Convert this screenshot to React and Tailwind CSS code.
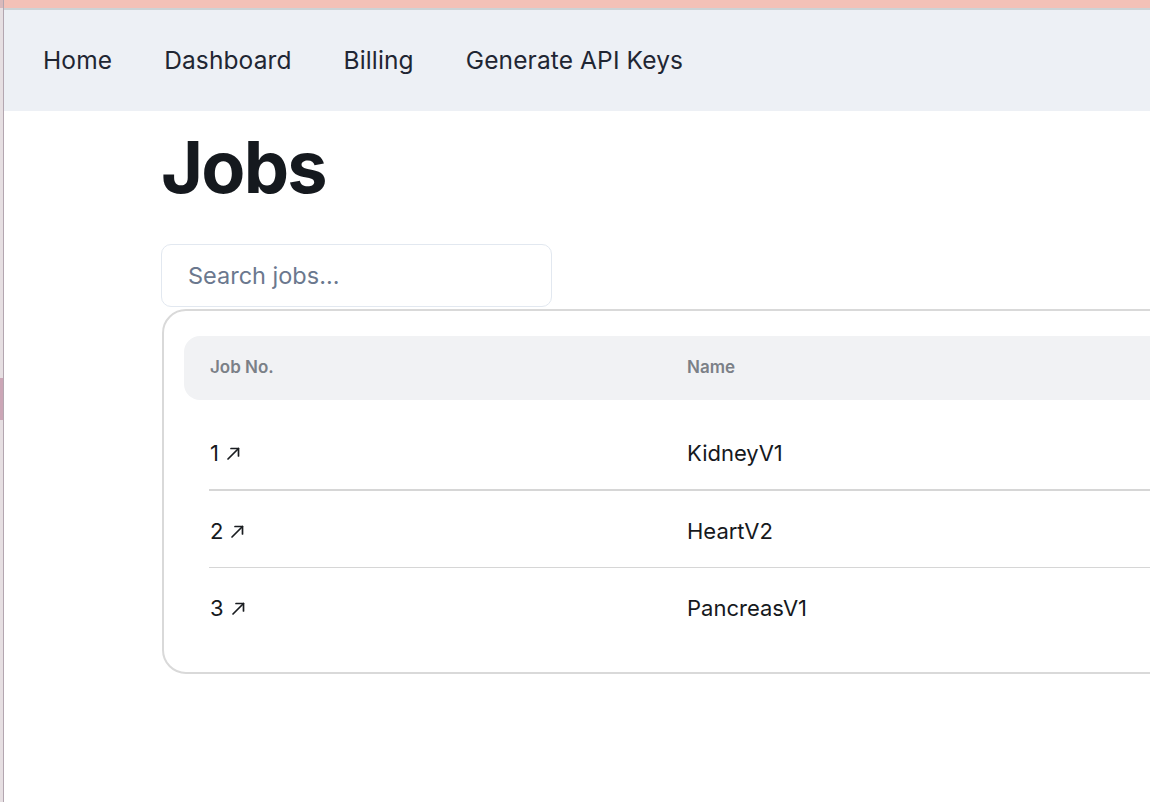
import React from "react";

const navItems = ["Home", "Dashboard", "Billing", "Generate API Keys"];

const jobs = [
  { no: 1, name: "KidneyV1" },
  { no: 2, name: "HeartV2" },
  { no: 3, name: "PancreasV1" },
];

const ArrowOut = () => (
  <svg width="15" height="15" viewBox="0 0 15 15" fill="none" stroke="#1a1d21" strokeWidth="1.7" strokeLinecap="round" strokeLinejoin="round">
    <path d="M2 13 L12.5 2.5" />
    <path d="M5 2.5 H12.5 V10" />
  </svg>
);

export default function App() {
  return (
    <div className="flex w-[1150px] h-[802px] overflow-hidden bg-white font-['Inter',sans-serif]">
      {/* window behind, cut off at the left */}
      <div className="w-[3px] shrink-0 flex flex-col bg-[#e6dfe2]">
        <div className="h-[8px] bg-[#d9b9bb]" />
        <div className="h-[370px]" />
        <div className="h-[42px] bg-[#cba6b6]" />
      </div>
      <div className="w-[1px] shrink-0 bg-[#b3a6b0]" />

      <div className="flex-1 min-w-0 flex flex-col">
        <div className="h-[8px] bg-[#f3c1b7] shrink-0" />
        <div className="h-[2px] bg-[#ccd3d6] shrink-0" />

        <nav className="h-[101px] shrink-0 bg-[#edf0f5] flex items-center gap-[52px] pl-[39px] text-[24.5px] tracking-[0.005em] text-[#1f2633]">
          {navItems.map((item) => (
            <span key={item} className="whitespace-nowrap">
              {item}
            </span>
          ))}
        </nav>

        <main className="pl-[157px] w-[1300px]">
          <h1 className="mt-[20px] text-[72px] leading-none font-bold tracking-tight text-[#15191e]">
            Jobs
          </h1>

          <div className="mt-[41px] w-[391px] h-[63px] rounded-[10px] border border-[#e2e8f0] flex items-center pl-[26px]">
            <input
              placeholder="Search jobs..."
              className="w-full outline-none bg-transparent text-[23.5px] text-[#1f2633] placeholder:text-[#6b788e]"
            />
          </div>

          <div className="mt-[2px] ml-[1px] rounded-[24px] border-2 border-[#d9d9d9] pt-[25px] pl-[20px] pb-[27px]">
            <div className="h-[64px] rounded-[16px] bg-[#f1f2f4] grid grid-cols-[477px_1fr] items-center pl-[26px] text-[17px] font-semibold text-[#7b8087]">
              <span>Job No.</span>
              <span>Name</span>
            </div>

            <div className="ml-[25px] mt-[14px]">
              {jobs.map((job, i) => (
                <div
                  key={job.no}
                  className={
                    i === 0
                      ? "h-[77px] pt-[4px] grid grid-cols-[478px_1fr] items-center border-b-2 border-[#d6d6d6] text-[22px] text-[#16191d]"
                      : i === 1
                      ? "h-[77px] pt-[4px] grid grid-cols-[478px_1fr] items-center border-b border-[#d6d6d6] text-[22px] text-[#16191d]"
                      : "h-[77px] pt-[4px] grid grid-cols-[478px_1fr] items-center text-[22px] text-[#16191d]"
                  }
                >
                  <span className="flex items-center gap-[7px] pl-px">
                    {job.no}
                    <ArrowOut />
                  </span>
                  <span>{job.name}</span>
                </div>
              ))}
            </div>
          </div>
        </main>
      </div>
    </div>
  );
}
